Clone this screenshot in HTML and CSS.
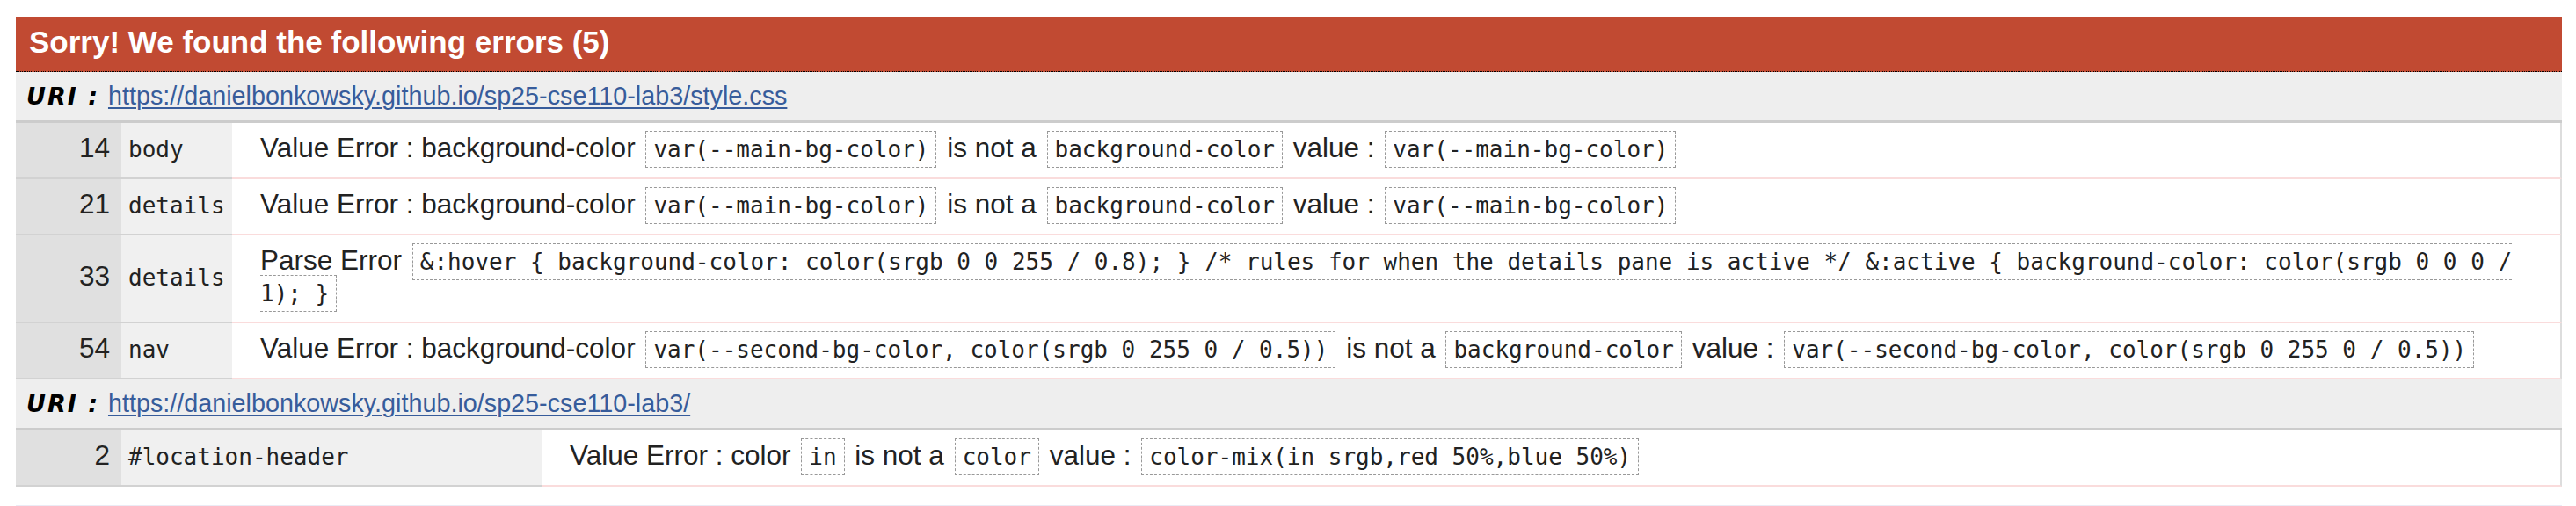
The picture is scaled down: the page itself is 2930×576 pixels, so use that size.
FILE: index.html
```html
<!DOCTYPE html>
<html lang="en">
<head>
<meta charset="utf-8">
<title>W3C CSS Validator results</title>
<link rel="stylesheet" href="styles.css">
</head>
<body>
<div class="page">
  <div class="errors">
    <h3 class="title">Sorry! We found the following errors (5)</h3>

    <div class="section">
      <h4 class="uri"><span class="uri-label">URI :</span> <a class="uri-link" href="#">https://danielbonkowsky.github.io/sp25-cse110-lab3/style.css</a></h4>
      <table class="errtable t1">
        <tr>
          <td class="ln">14</td>
          <td class="ctx">body</td>
          <td class="msg">Value Error : background-color <span class="code">var(--main-bg-color)</span> is not a <span class="code">background-color</span> value : <span class="code">var(--main-bg-color)</span></td>
        </tr>
        <tr>
          <td class="ln">21</td>
          <td class="ctx">details</td>
          <td class="msg">Value Error : background-color <span class="code">var(--main-bg-color)</span> is not a <span class="code">background-color</span> value : <span class="code">var(--main-bg-color)</span></td>
        </tr>
        <tr>
          <td class="ln">33</td>
          <td class="ctx">details</td>
          <td class="msg">Parse Error <span class="code">&amp;:hover { background-color: color(srgb 0 0 255 / 0.8); } /* rules for when the details pane is active */ &amp;:active { background-color: color(srgb 0 0 0 / 1); }</span></td>
        </tr>
        <tr>
          <td class="ln">54</td>
          <td class="ctx">nav</td>
          <td class="msg">Value Error : background-color <span class="code">var(--second-bg-color, color(srgb 0 255 0 / 0.5))</span> is not a <span class="code">background-color</span> value : <span class="code">var(--second-bg-color, color(srgb 0 255 0 / 0.5))</span></td>
        </tr>
      </table>
    </div>

    <div class="section">
      <h4 class="uri"><span class="uri-label">URI :</span> <a class="uri-link" href="#">https://danielbonkowsky.github.io/sp25-cse110-lab3/</a></h4>
      <table class="errtable t2">
        <tr>
          <td class="ln">2</td>
          <td class="ctx">#location-header</td>
          <td class="msg">Value Error : color <span class="code">in</span> is not a <span class="code">color</span> value : <span class="code">color-mix(in srgb,red 50%,blue 50%)</span></td>
        </tr>
      </table>
    </div>
  </div>
  <div class="next"></div>
</div>
</body>
</html>
```

FILE: styles.css
```css
html, body {
  margin: 0;
  padding: 0;
  background: #ffffff;
}

body {
  color: #222222;
  font-family: "Liberation Sans", Arial, Helvetica, sans-serif;
}

.page {
  padding: 19px 16px 0 18px;
}

.title {
  margin: 0;
  background: #c14a32;
  color: #ffffff;
  font-family: "Liberation Sans", Arial, Helvetica, sans-serif;
  font-weight: bold;
  font-size: 35px;
  line-height: 35px;
  padding: 11px 15px 16px 15px;
  border-bottom: 1px dotted #000000;
}

.uri {
  margin: 0;
  background: #eeeeee;
  font-weight: normal;
  font-size: 28.75px;
  line-height: 33px;
  padding: 11px 0 11px 12px;
  border-bottom: 3px solid #cccccc;
  white-space: nowrap;
}

.uri-label {
  font-family: "DejaVu Sans", Verdana, sans-serif;
  font-weight: bold;
  font-style: italic;
  font-size: 27px;
  letter-spacing: 2px;
  color: #000000;
  margin-right: 2px;
}

.uri-link {
  color: #375c9b;
  text-decoration: underline;
  text-decoration-thickness: 2px;
  text-underline-offset: 3px;
}

.errtable {
  width: 100%;
  table-layout: fixed;
  border-collapse: separate;
  border-spacing: 0;
}

.errtable td {
  padding: 10px 8px 16px 8px;
  line-height: 36px;
  vertical-align: middle;
}

.ln {
  width: 107px;
  background: #e0e0e0;
  text-align: right;
  font-size: 31.5px;
  border-bottom: 2px solid #d2d2d2;
}

.errtable td.ln {
  padding-left: 0;
  padding-right: 13px;
}

.ctx {
  background: #f0f0f0;
  font-family: "DejaVu Sans Mono", Menlo, monospace;
  font-size: 26px;
  white-space: nowrap;
  border-bottom: 2px solid #d2d2d2;
}

.errtable td.ctx {
  padding-top: 12px;
  padding-bottom: 14px;
}

.t1 .ctx {
  width: 110px;
}

.t2 .ctx {
  width: 462px;
}

.msg {
  background: #ffffff;
  font-size: 31.5px;
  border-bottom: 2px solid #fadcdc;
  border-right: 2px solid #dddddd;
}

.errtable td.msg {
  padding-left: 32px;
  padding-right: 14px;
}

.code {
  font-family: "DejaVu Sans Mono", Menlo, monospace;
  font-size: 26px;
  line-height: 26px;
  border: 1px dashed #999999;
  padding: 5px 8px;
  margin: 0 3px;
}

.next {
  margin-top: 21px;
  border-top: 1px solid #ebebf5;
}
```
